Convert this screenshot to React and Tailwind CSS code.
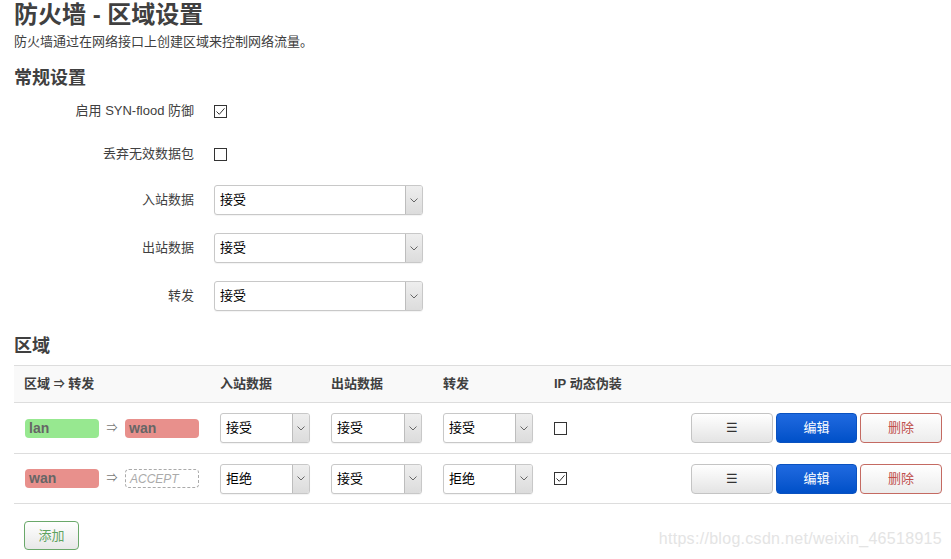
import React from "react";

const FONT = { fontFamily: '"Liberation Sans", "Noto Sans CJK SC", sans-serif' };

function Check({ checked }) {
  return (
    <span className="w-[13px] h-[13px] border border-[#333] bg-white flex items-center justify-center">
      {checked && (
        <svg width="11" height="11" viewBox="0 0 11 11">
          <path d="M1.5 5.5 L4.3 8.3 L9.5 2.3" fill="none" stroke="#333" strokeWidth="1" />
        </svg>
      )}
    </span>
  );
}

function Select({ value, w = "w-[209px]", h = "h-[30px]" }) {
  return (
    <div className={`${w} ${h} border border-[#c8c8c8] rounded-[3px] bg-white flex items-stretch shadow-[0_1px_1px_rgba(0,0,0,0.05)]`}>
      <span className="flex-1 flex items-center pl-[5px] text-[13px] text-black">{value}</span>
      <span className="w-[17px] border-l border-[#bdbdbd] bg-gradient-to-b from-[#eeeeee] to-[#dcdcdc] flex items-center justify-center rounded-r-[2px]">
        <svg width="8" height="5" viewBox="0 0 8 5">
          <path d="M0.5 0.5 L4 4 L7.5 0.5" fill="none" stroke="#666" strokeWidth="1" />
        </svg>
      </span>
    </div>
  );
}

function Badge({ name, color }) {
  return (
    <span className={`w-[74px] h-[19px] rounded-[4px] ${color} text-[#666] text-[14px] font-bold flex items-center pl-[4px]`}>
      {name}
    </span>
  );
}

const rows = [
  { zone: "lan", zoneColor: "bg-[#97e890]", fwd: "wan", input: "接受", output: "接受", forward: "接受", masq: false, h: "h-[51px]" },
  { zone: "wan", zoneColor: "bg-[#e8908c]", fwd: null, input: "拒绝", output: "接受", forward: "拒绝", masq: true, h: "h-[50px]" },
];

export default function App() {
  return (
    <div className="w-[951px] h-[559px] overflow-hidden bg-white relative pl-[14px] text-[#404040]" style={FONT}>
      <h1 className="text-[24px] font-bold leading-[30px] text-[#404040]">防火墙 - 区域设置</h1>
      <p className="text-[13px] leading-[20px] mt-[2px] text-[#404040]">防火墙通过在网络接口上创建区域来控制网络流量。</p>

      <h2 className="text-[18px] font-bold leading-[24px] mt-[14px]">常规设置</h2>

      <div className="flex flex-col text-[13px]">
        <div className="h-[42px] flex items-center">
          <span className="w-[180px] text-right">启用 SYN-flood 防御</span>
          <span className="ml-[20px]"><Check checked /></span>
        </div>
        <div className="h-[44px] flex items-center">
          <span className="w-[180px] text-right">丢弃无效数据包</span>
          <span className="ml-[20px]"><Check /></span>
        </div>
        {["入站数据", "出站数据", "转发"].map((l) => (
          <div key={l} className="h-[48px] flex items-center">
            <span className="w-[180px] text-right">{l}</span>
            <span className="ml-[20px]"><Select value="接受" /></span>
          </div>
        ))}
      </div>

      <h2 className="text-[18px] font-bold leading-[24px] mt-[14px]">区域</h2>

      <div className="mt-[7px] text-[13px]">
        <div className="grid grid-cols-[196px_111px_112px_111px_1fr] h-[38px] items-center bg-[#f9f9f9] border-t border-b border-[#dddddd] font-bold">
          <span className="pl-[10px]">区域 <span className="text-[11px]">⇒</span> 转发</span>
          <span className="pl-[10px]">入站数据</span>
          <span className="pl-[10px]">出站数据</span>
          <span className="pl-[10px]">转发</span>
          <span className="pl-[10px]">IP 动态伪装</span>
        </div>
        {rows.map((r) => (
          <div key={r.zone} className={`grid grid-cols-[196px_111px_112px_111px_1fr_auto] ${r.h} items-center border-b border-[#dddddd]`}>
            <div className="pl-[11px] flex items-center">
              <Badge name={r.zone} color={r.zoneColor} />
              <span className="w-[26px] text-center text-[11px] text-[#777]">⇒</span>
              {r.fwd ? (
                <Badge name={r.fwd} color="bg-[#e8908c]" />
              ) : (
                <span className="w-[74px] h-[19px] rounded-[4px] border border-dashed border-[#aaa] text-[#aaa] italic text-[12px] flex items-center pl-[4px]">
                  ACCEPT
                </span>
              )}
            </div>
            <div className="pl-[10px]"><Select value={r.input} w="w-[90px]" /></div>
            <div className="pl-[10px]"><Select value={r.output} w="w-[91px]" /></div>
            <div className="pl-[10px]"><Select value={r.forward} w="w-[90px]" /></div>
            <div className="pl-[10px]"><Check checked={r.masq} /></div>
            <div className="flex gap-[3px] pr-[9px]">
              <button className="w-[82px] h-[30px] rounded-[4px] border border-[#c4c4c4] bg-gradient-to-b from-white to-[#e4e4e4] text-[#333] text-[13px]">☰</button>
              <button className="w-[81px] h-[30px] rounded-[4px] border border-[#0a52c0] bg-gradient-to-b from-[#1f6ae0] to-[#0050c8] text-white text-[13px]">编辑</button>
              <button className="w-[82px] h-[30px] rounded-[4px] border border-[#c46a62] bg-gradient-to-b from-white to-[#ececec] text-[#c0504d] text-[13px]">删除</button>
            </div>
          </div>
        ))}
        <button className="mt-[17px] ml-[10px] w-[55px] h-[29px] rounded-[4px] border border-[#6aa86a] bg-gradient-to-b from-white to-[#e8e8e8] text-[#5fa35f] text-[13px]">添加</button>
      </div>

      <span className="absolute right-[9px] bottom-[8px] text-[16px] text-[#e4e4e4] tracking-[0.3px]">https://blog.csdn.net/weixin_46518915</span>
    </div>
  );
}
